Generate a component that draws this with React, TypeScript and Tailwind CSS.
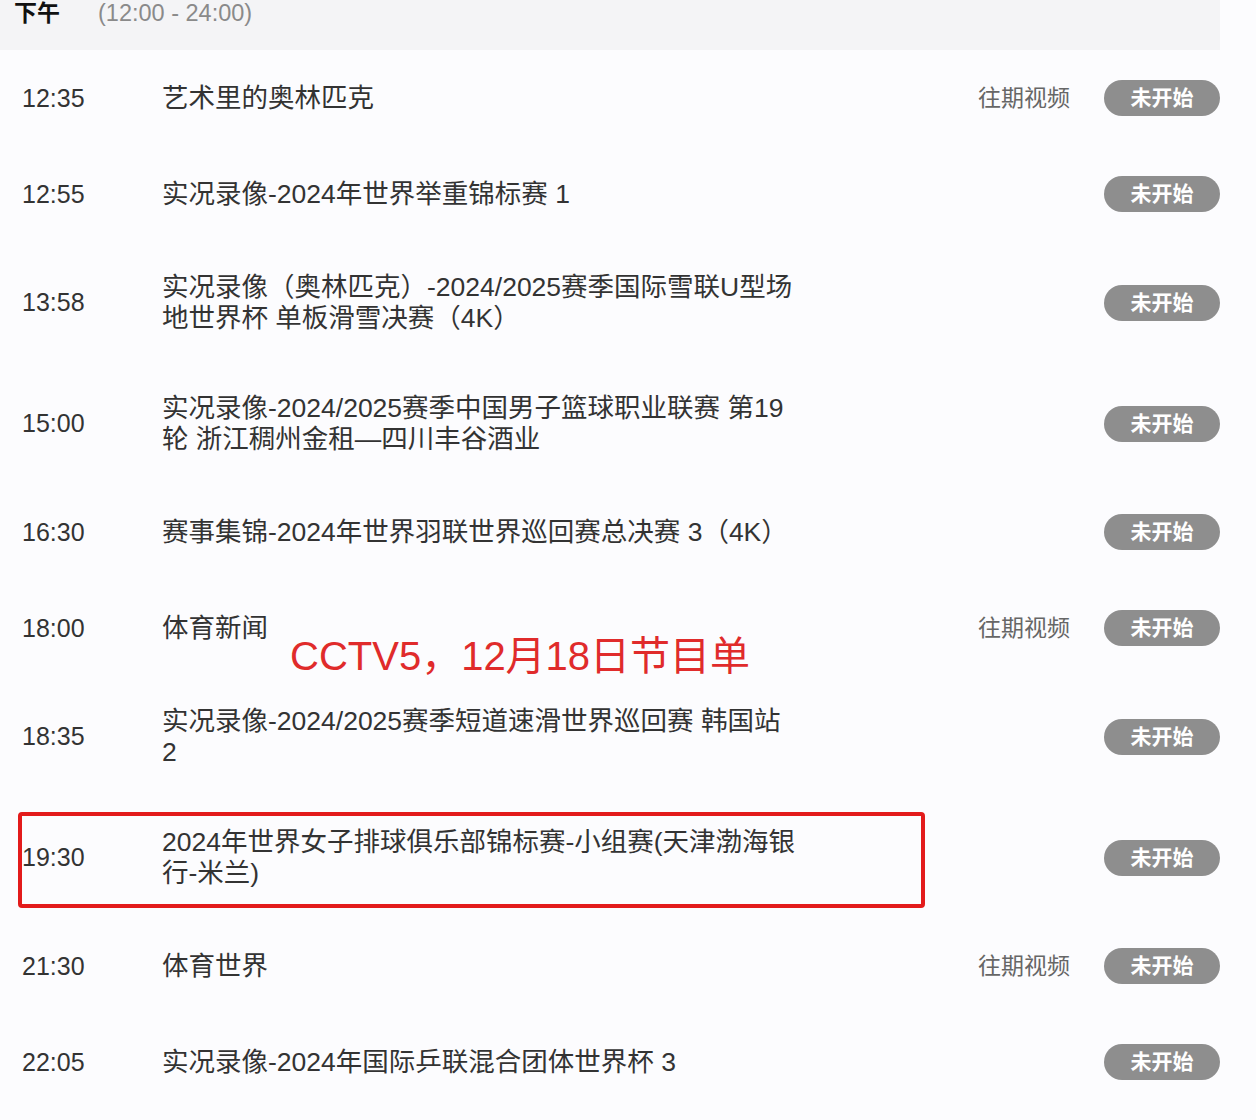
import React from 'react';

interface Program {
  time: string;
  lines: string[];
  replay?: boolean;
}

const programs: Program[] = [
  { time: '12:35', lines: ['艺术里的奥林匹克'], replay: true },
  { time: '12:55', lines: ['实况录像-2024年世界举重锦标赛 1'] },
  { time: '13:58', lines: ['实况录像（奥林匹克）-2024/2025赛季国际雪联U型场', '地世界杯 单板滑雪决赛（4K）'] },
  { time: '15:00', lines: ['实况录像-2024/2025赛季中国男子篮球职业联赛 第19', '轮 浙江稠州金租—四川丰谷酒业'] },
  { time: '16:30', lines: ['赛事集锦-2024年世界羽联世界巡回赛总决赛 3（4K）'] },
  { time: '18:00', lines: ['体育新闻'], replay: true },
  { time: '18:35', lines: ['实况录像-2024/2025赛季短道速滑世界巡回赛 韩国站', '2'] },
  { time: '19:30', lines: ['2024年世界女子排球俱乐部锦标赛-小组赛(天津渤海银', '行-米兰)'] },
  { time: '21:30', lines: ['体育世界'], replay: true },
  { time: '22:05', lines: ['实况录像-2024年国际乒联混合团体世界杯 3'] },
];

const font = { fontFamily: '"Liberation Sans", "Noto Sans CJK SC", sans-serif' };

export default function App() {
  return (
    <div className="relative w-[1256px] h-[1120px] overflow-hidden bg-[#fcfcfe] text-[#333]" style={font}>
      {/* 时段标题 */}
      <div className="w-[1220px] h-[50px] bg-[#f4f4f6] flex items-start pl-[14px]">
        <span className="w-[84px] text-[23px] leading-[26px] font-bold text-[#111]">下午</span>
        <span className="text-[23.5px] leading-[26px] text-[#8a8a8a]">(12:00 - 24:00)</span>
      </div>

      {/* 节目列表 */}
      <div className="flex flex-col">
        {programs.map((p) => (
          <div key={p.time} className="flex items-center min-h-[96px] py-[29.5px] pl-[22px] pr-[36px]">
            <div className="w-[140px] shrink-0 text-[25px] leading-[31px] text-[#333]">{p.time}</div>
            <div className="flex-1 text-[26.5px] leading-[31px] text-[#333]">
              {p.lines.map((l) => (
                <div key={l} className="whitespace-nowrap">{l}</div>
              ))}
            </div>
            <div className="w-[126px] shrink-0 text-[23px] leading-[31px] text-[#666]">
              {p.replay ? '往期视频' : ''}
            </div>
            <div className="w-[116px] h-[36px] shrink-0 rounded-full bg-[#8e8e8e] flex items-center justify-center text-white text-[21px] font-semibold">
              未开始
            </div>
          </div>
        ))}
      </div>

      {/* 标注 */}
      <div className="absolute left-[290px] top-[634px] text-[40px] leading-[44px] text-[#e02b2b] whitespace-nowrap">
        CCTV5，12月18日节目单
      </div>
      <div className="absolute left-[18px] top-[812px] w-[907px] h-[96px] border-[4px] border-[#e31b1b] rounded-[4px]" />
    </div>
  );
}
